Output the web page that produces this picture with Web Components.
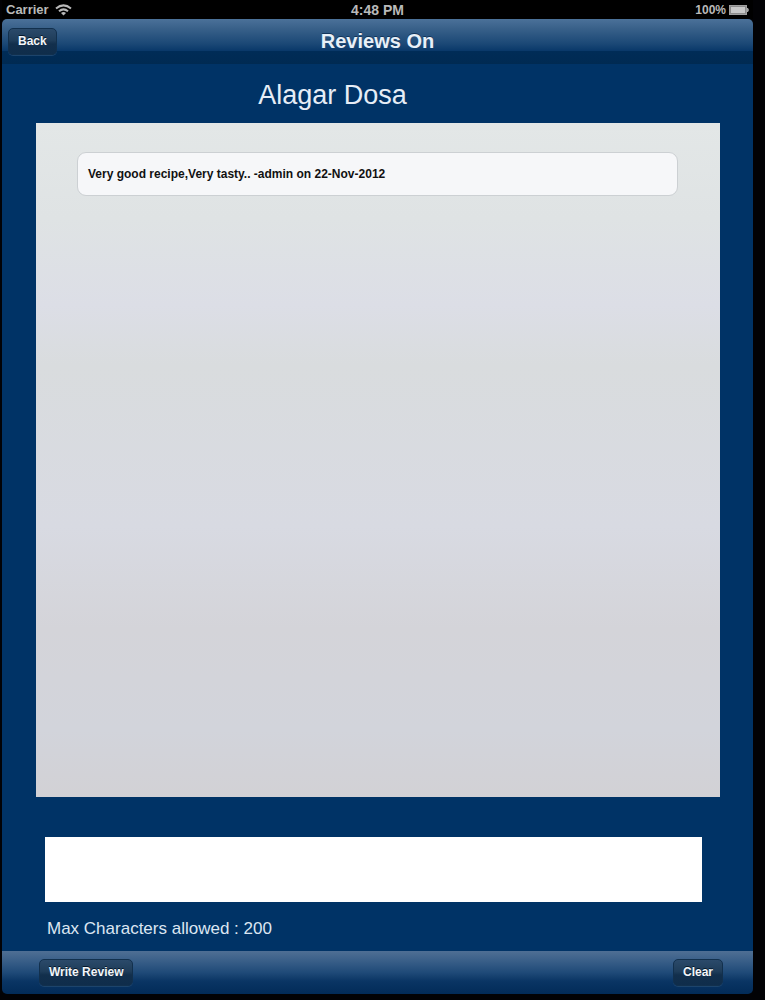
<!DOCTYPE html>
<html lang="en">
<head>
<meta charset="utf-8">
<meta name="viewport" content="width=device-width, initial-scale=1">
<title>Reviews On</title>
<style>
    body {
        margin: 0;
        background: #020205;
        font-family: "Liberation Sans", Arial, sans-serif;
    }
</style>
</head>
<body>
<review-app></review-app>

<script>
class StatusBar extends HTMLElement {
    constructor() {
        super();
        this.attachShadow({ mode: 'open' });
        this.shadowRoot.innerHTML = `
            <style>
                :host {
                    display: grid;
                    grid-template-columns: 1fr auto 1fr;
                    align-items: center;
                    height: 19px;
                    padding: 0 4px;
                    background: #000;
                    color: #b9b9b9;
                    font-size: 13px;
                    font-weight: bold;
                    line-height: 18px;
                }
                .left, .right {
                    display: flex;
                    align-items: center;
                    gap: 6px;
                }
                .right {
                    justify-content: flex-end;
                    gap: 3px;
                    font-size: 12px;
                }
                .time {
                    font-size: 14px;
                }
                svg {
                    display: block;
                }
            </style>
            <div class="left">
                <span>${this.getAttribute('carrier')}</span>
                <svg width="17" height="12" viewBox="0 0 17 12" fill="none" stroke="#b9b9b9" stroke-width="2" aria-hidden="true">
                    <path d="M1 4.5Q8.5-1.7 16 4.5"/>
                    <path d="M4 7.3Q8.5 3.4 13 7.3"/>
                    <path d="M6 9Q8.5 7.2 11 9L8.5 11.5Z" fill="#b9b9b9" stroke="none"/>
                </svg>
            </div>
            <span class="time">${this.getAttribute('time')}</span>
            <div class="right">
                <span>${this.getAttribute('battery')}</span>
                <svg width="20" height="10" viewBox="0 0 20 10" aria-hidden="true">
                    <rect x="0.5" y="0.5" width="17" height="9" fill="#8c8c8c" stroke="#a0a0a0"/>
                    <rect x="2" y="2" width="14" height="6" fill="#c8c8c8"/>
                    <path d="M18 3h1l1 2-1 2h-1z" fill="#a5a5a5"/>
                </svg>
            </div>
        `;
    }
}

class BarButton extends HTMLElement {
    constructor() {
        super();
        this.attachShadow({ mode: 'open' });
        this.shadowRoot.innerHTML = `
            <style>
                :host {
                    display: block;
                }
                button {
                    display: block;
                    height: 27px;
                    padding: 0 9px;
                    border: 1px solid #12304d;
                    border-radius: 5px;
                    background: linear-gradient(#2b4a6a, #1f3d5a 45%, #122f4c 60%, #0f2d4b);
                    box-shadow: 0 1px 0 #1c446c;
                    color: #f2f6fa;
                    font: bold 12px/25px "Liberation Sans", Arial, sans-serif;
                    text-shadow: 0 -1px 0 #06182a;
                    cursor: pointer;
                }
            </style>
            <button type="button"><slot></slot></button>
        `;
    }
}

class NavBar extends HTMLElement {
    constructor() {
        super();
        this.attachShadow({ mode: 'open' });
        this.shadowRoot.innerHTML = `
            <style>
                :host {
                    display: grid;
                    grid-template-columns: 1fr auto 1fr;
                    align-items: center;
                    height: 45px;
                    padding: 0 6px;
                    box-sizing: border-box;
                    border-radius: 5px 5px 0 0;
                    background: linear-gradient(#4b7199, #386089 22%, #1b4876 55%, #0a396a 70%, #002c57 72%, #002a52);
                }
                .start {
                    justify-self: start;
                }
                h1 {
                    margin: 0;
                    padding-bottom: 2px;
                    color: #e8f0f8;
                    font-size: 20px;
                    line-height: 24px;
                    text-shadow: 0 -1px 0 #12355a;
                }
            </style>
            <div class="start"><slot name="start"></slot></div>
            <h1><slot></slot></h1>
        `;
    }
}

class ReviewItem extends HTMLElement {
    constructor() {
        super();
        this.attachShadow({ mode: 'open' });
        this.shadowRoot.innerHTML = `
            <style>
                :host {
                    display: block;
                    padding: 13px 10px;
                    border: 1px solid #ccd0d3;
                    border-radius: 9px;
                    background: #f6f7f9;
                    color: #111;
                    font-size: 12px;
                    font-weight: bold;
                    line-height: 16px;
                }
            </style>
            <slot></slot>
        `;
    }
}

class ReviewList extends HTMLElement {
    constructor() {
        super();
        this.attachShadow({ mode: 'open' });
        this.shadowRoot.innerHTML = `
            <style>
                :host {
                    display: flex;
                    flex-direction: column;
                    gap: 12px;
                    padding: 29px 42px 29px 41px;
                    background: linear-gradient(#e3e7e7, #dfe3e4 14%, #dcdee6 27%, #d9dcde 36%, #d8dae2 60%, #d4d4d9 75%, #d2d4db 90%, #d2d1d5);
                }
            </style>
            <slot></slot>
        `;
    }
}

class ReviewForm extends HTMLElement {
    constructor() {
        super();
        this.attachShadow({ mode: 'open' });
        this.shadowRoot.innerHTML = `
            <style>
                :host {
                    display: flex;
                    flex-direction: column;
                    gap: 16px;
                }
                textarea {
                    display: block;
                    box-sizing: border-box;
                    width: 100%;
                    height: 65px;
                    margin: 0;
                    padding: 8px;
                    border: 0;
                    border-radius: 0;
                    background: #fff;
                    font: 17px/20px "Liberation Sans", Arial, sans-serif;
                    resize: none;
                }
                label {
                    padding-left: 2px;
                    color: #dce6f2;
                    font-size: 17px;
                    line-height: 22px;
                }
            </style>
            <textarea id="review" maxlength="200"></textarea>
            <label for="review">Max Characters allowed : 200</label>
        `;
        this.field = this.shadowRoot.getElementById('review');
    }

    clear() {
        this.field.value = '';
    }

    focusField() {
        this.field.focus();
    }
}

class ToolBar extends HTMLElement {
    constructor() {
        super();
        this.attachShadow({ mode: 'open' });
        this.shadowRoot.innerHTML = `
            <style>
                :host {
                    display: flex;
                    align-items: center;
                    justify-content: space-between;
                    height: 43px;
                    padding: 0 30px 0 37px;
                    box-sizing: border-box;
                    border-radius: 0 0 5px 5px;
                    background: linear-gradient(#4f6f94, #3c618a 20%, #1f4a78 50%, #0a3564 70%, #022b58);
                }
            </style>
            <slot></slot>
        `;
    }
}

class ReviewApp extends HTMLElement {
    constructor() {
        super();
        this.attachShadow({ mode: 'open' });
        this.shadowRoot.innerHTML = `
            <style>
                :host {
                    display: flex;
                    flex-direction: column;
                    min-height: 100vh;
                    box-sizing: border-box;
                    padding: 0 12px 6px 2px;
                }
                main {
                    flex: 1;
                    display: flex;
                    flex-direction: column;
                    background: #003366;
                }
                h2 {
                    margin: 0;
                    padding: 15px 90px 12px 0;
                    color: #e6edf6;
                    font-size: 27px;
                    font-weight: normal;
                    line-height: 32px;
                    text-align: center;
                }
                review-list {
                    flex: 1;
                    margin: 0 33px 0 34px;
                }
                review-form {
                    margin: 40px 51px 11px 43px;
                }
            </style>
            <status-bar carrier="Carrier" time="4:48 PM" battery="100%"></status-bar>
            <nav-bar>
                <bar-button slot="start">Back</bar-button>
                Reviews On
            </nav-bar>
            <main>
                <h2>Alagar Dosa</h2>
                <review-list>
                    <review-item>Very good recipe,Very tasty.. -admin on 22-Nov-2012</review-item>
                </review-list>
                <review-form></review-form>
            </main>
            <tool-bar>
                <bar-button id="write">Write Review</bar-button>
                <bar-button id="clear">Clear</bar-button>
            </tool-bar>
        `;

        const form = this.shadowRoot.querySelector('review-form');
        this.shadowRoot.getElementById('write').addEventListener('click', () => form.focusField());
        this.shadowRoot.getElementById('clear').addEventListener('click', () => form.clear());
    }
}

customElements.define('status-bar', StatusBar);
customElements.define('bar-button', BarButton);
customElements.define('nav-bar', NavBar);
customElements.define('review-item', ReviewItem);
customElements.define('review-list', ReviewList);
customElements.define('review-form', ReviewForm);
customElements.define('tool-bar', ToolBar);
customElements.define('review-app', ReviewApp);
</script>
</body>
</html>
